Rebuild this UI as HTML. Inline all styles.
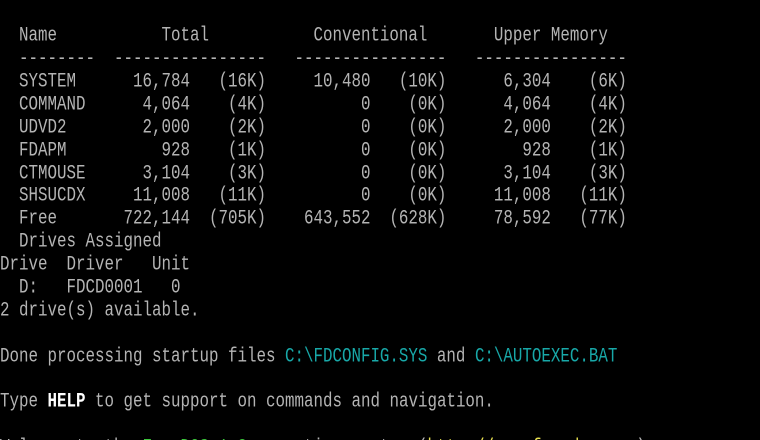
<!DOCTYPE html>
<html><head><meta charset="utf-8"><style>
html,body{margin:0;padding:0;background:#000;width:760px;height:440px;overflow:hidden}
body{position:relative}
pre{position:absolute;left:0;top:-20.6px;margin:0;font-family:"Liberation Mono",monospace;font-size:15.83px;line-height:22.9px;color:#b4b4b4;}
.l{display:block;height:22.9px;transform:scaleY(1.3);transform-origin:50% 55%}
.c{color:#18a8a8}.w{color:#fff;font-weight:bold}.g{color:#3cc83c}.y{color:#e8e050}
</style></head><body><pre><span class="l">Modules using memory below 1 MB:</span><span class="l"> </span><span class="l">  Name           Total           Conventional       Upper Memory</span><span class="l">  --------  ----------------   ----------------   ----------------</span><span class="l">  SYSTEM      16,784   (16K)     10,480   (10K)      6,304    (6K)</span><span class="l">  COMMAND      4,064    (4K)          0    (0K)      4,064    (4K)</span><span class="l">  UDVD2        2,000    (2K)          0    (0K)      2,000    (2K)</span><span class="l">  FDAPM          928    (1K)          0    (0K)        928    (1K)</span><span class="l">  CTMOUSE      3,104    (3K)          0    (0K)      3,104    (3K)</span><span class="l">  SHSUCDX     11,008   (11K)          0    (0K)     11,008   (11K)</span><span class="l">  Free       722,144  (705K)    643,552  (628K)     78,592   (77K)</span><span class="l">  Drives Assigned</span><span class="l">Drive  Driver   Unit</span><span class="l">  D:   FDCD0001   0</span><span class="l">2 drive(s) available.</span><span class="l"> </span><span class="l">Done processing startup files <span class="c">C:\FDCONFIG.SYS</span> and <span class="c">C:\AUTOEXEC.BAT</span></span><span class="l"> </span><span class="l">Type <span class="w">HELP</span> to get support on commands and navigation.</span><span class="l"> </span><span class="l">Welcome to the <span class="g">FreeDOS 1.3</span> operating system (<span class="y">http://www.freedos.org</span>)</span></pre></body></html>
